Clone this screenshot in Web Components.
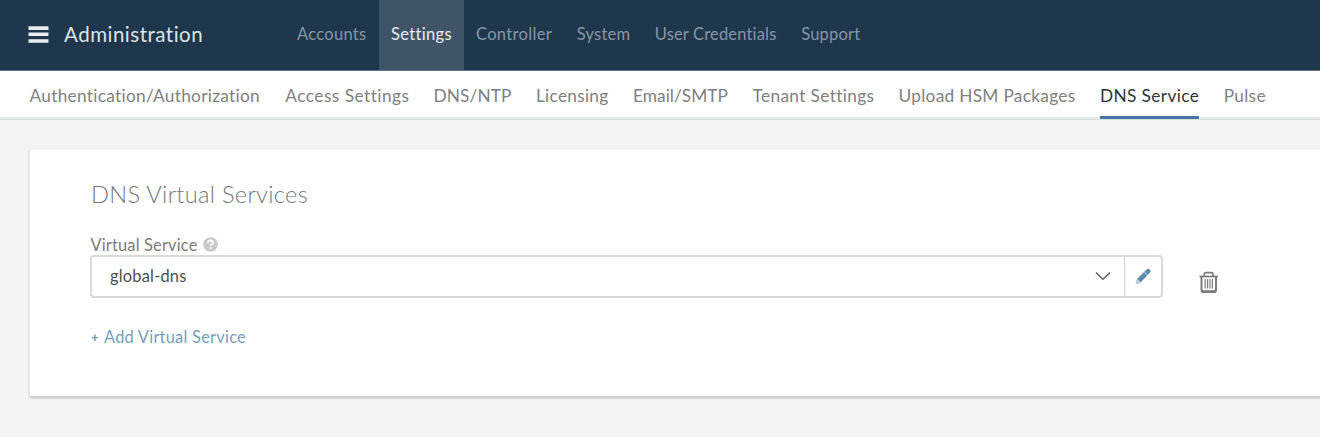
<!DOCTYPE html>
<html lang="en">
<head>
<meta charset="utf-8">
<title>Administration</title>
<style>
html,body{margin:0;height:437px;overflow:hidden;background:#f3f3f3;font-family:Lato,"Open Sans",sans-serif}
</style>
</head>
<body>
<admin-page></admin-page>
<script>
// A single line of text, tracked to fill the width given in "w".
class TextRun extends HTMLElement {
  constructor(){
    super();
    this.attachShadow({mode:'open'}).innerHTML='<style>:host{display:block;white-space:nowrap;flex:none}span{display:inline-block}</style><span><slot></slot></span>';
  }
  connectedCallback(){
    const w=+this.getAttribute('w');
    this.style.width=w+'px';
    const s=this.shadowRoot.querySelector('span');
    const n=this.textContent.length;
    s.style.letterSpacing=((w-s.getBoundingClientRect().width)/n).toFixed(3)+'px';
  }
}

class AdminHeader extends HTMLElement {
  constructor(){
    super();
    this.attachShadow({mode:'open'}).innerHTML=`<style>
:host{display:flex;height:70px;background:#1e374c;border-bottom:1px solid #60758a;box-sizing:content-box;line-height:70px}
svg{margin:26px 0 0 28px;width:21px;height:18px;flex:none}
.title{margin-left:15px;width:218px;font-size:20.5px;line-height:69px;color:#dde3e8}
nav{display:flex}
</style>
<svg viewBox="0 0 21 18"><path d="M.5 2.1h20M.5 8.2h20M.5 15h20" stroke="#e9ecef" stroke-width="3.6"/></svg>
<div class="title"><slot name="title"></slot></div><nav><slot></slot></nav>`;
  }
}

class NavItem extends HTMLElement {
  constructor(){
    super();
    this.attachShadow({mode:'open'}).innerHTML=`<style>
:host{display:block;height:70px;padding:0 12.25px;line-height:68px;font-size:16.5px;color:#8796a5}
:host([active]){background:#405468;color:#e8edf1}
</style><slot></slot>`;
  }
}

class TabBar extends HTMLElement {
  constructor(){
    super();
    this.attachShadow({mode:'open'}).innerHTML=`<style>
:host{display:flex;height:46px;gap:24.5px;padding-left:29.5px;background:#fff;border-bottom:2px solid #e5e9e8;box-shadow:0 1px #d9dddc}
</style><slot></slot>`;
  }
}

class TabItem extends HTMLElement {
  constructor(){
    super();
    this.attachShadow({mode:'open'}).innerHTML=`<style>
:host{display:block;box-sizing:border-box;height:48px;font-size:17.3px;line-height:50px;color:#808080}
:host([active]){color:#303438;border-bottom:3px solid #4474a3}
</style><slot></slot>`;
  }
}

class ContentCard extends HTMLElement {
  constructor(){
    super();
    this.attachShadow({mode:'open'}).innerHTML=`<style>
:host{display:flex;flex-direction:column;box-sizing:border-box;margin:31px 0 0 30px;height:246px;padding:27px 0 0 61px;background:#fff;box-shadow:0 1px #cccccc,0 2px #d6d6d6,-1px 1px 0 1px #e6e6e6,0 3px 1px #dadada}
.h{font-size:23.7px;font-weight:300;line-height:34px;color:#777}
</style><div class="h"><slot name="heading"></slot></div><slot></slot>`;
  }
}

class FieldLabel extends HTMLElement {
  constructor(){
    super();
    this.attachShadow({mode:'open'}).innerHTML=`<style>
:host{display:flex;align-items:center;gap:5px;margin:23px 0 0 -.5px;height:20px;font-size:16.4px;line-height:22px;color:#7c7c7c}
svg{width:15px;height:15px}
</style><slot></slot><svg viewBox="0 0 15 15"><circle cx="7.5" cy="7.5" r="7.3" fill="#c9c9c9"/><path d="M5 5.7C5.2 2.8 10 2.8 10 5.6C10 7.3 7.6 7.3 7.6 9" fill="none" stroke="#fff" stroke-width="1.9"/><path d="M6.6 10.3h2v1.8h-2z" fill="#fff"/></svg>`;
    this.style.paddingTop='1px';
    this.style.boxSizing='border-box';
  }
}

class ServiceSelect extends HTMLElement {
  constructor(){
    super();
    this.attachShadow({mode:'open'}).innerHTML=`<style>
:host{display:flex;margin:1px 0 0 -1px}
.box{display:flex;box-sizing:border-box;width:1073px;height:43px;border:2px solid #d9d9d9;border-radius:4px}
.value{flex:1;padding-left:18px;font-size:16.4px;line-height:38px;color:#4c4f52}
.chev{width:16px;height:10px;margin:14px 13px 0 0}
.edit{width:36px;border-left:1px solid #d4d4d4}
.edit svg{display:block;width:16px;height:17px;margin:10.5px 0 0 10px}
.trash{width:20px;height:23px;margin:16px 0 0 36px}
</style>
<div class="box"><div class="value"><slot></slot></div>
<svg class="chev" viewBox="0 0 16 10"><path d="M1 1.6L8 8.3L15 1.6" fill="none" stroke="#666" stroke-width="1.5"/></svg>
<div class="edit"><svg viewBox="0 0 16 17"><path d="M2 10.9L9 4L12.4 7.4L5.5 14.4Z" fill="#5b8eac"/><path d="M9.3 3.7L11.6 1.4Q13.4.1 14.8 1.6Q16.2 3 15 4.8L12.7 7.1Z" fill="#5b8eac"/><path d="M2 10.9L5.5 14.4L4.8 15.4L.7 16.3L1 12.8Z" fill="#b9cedb"/></svg></div></div>
<svg class="trash" viewBox="0 0 20 23"><g fill="none" stroke="#7c7c7c"><path d="M.5 5.5h18.4" stroke-width="1.8"/><path d="M5.3 5.2V3.2Q5.3 1.6 6.9 1.6H12.4Q14 1.6 14 3.2V5.2" stroke-width="1.7"/><path d="M2.5 5.6V19Q2.5 21 4.5 21H15Q17 21 17 19V5.6" stroke-width="2"/><path d="M3 20.6h13.5" stroke-width="2.8"/><path d="M6.2 8v9.5M8.6 8v9.5M11 8v9.5M13.4 8v9.5" stroke-width="1.2"/></g></svg>`;
  }
}

class AddLink extends HTMLElement {
  constructor(){
    super();
    this.attachShadow({mode:'open'}).innerHTML=`<style>
:host{display:flex;align-items:center;gap:5px;margin-top:27px;height:24px;font-size:16.4px;line-height:24px;color:#769fbb}
b{font-size:13px;width:8px;font-weight:900}
</style><b>+</b><slot></slot>`;
  }
}

class AdminPage extends HTMLElement {
  constructor(){
    super();
    this.attachShadow({mode:'open'}).innerHTML=`<style>:host{display:block}</style>
<admin-header><text-run slot="title" w="139.5">Administration</text-run>
<nav-item style="margin-left:2.7px"><text-run w="69.5">Accounts</text-run></nav-item><nav-item active><text-run w="60.5">Settings</text-run></nav-item><nav-item><text-run w="76.3">Controller</text-run></nav-item><nav-item><text-run w="53.5">System</text-run></nav-item><nav-item><text-run w="122">User Credentials</text-run></nav-item><nav-item><text-run w="59">Support</text-run></nav-item>
</admin-header>
<tab-bar><tab-item><text-run w="231.3">Authentication/Authorization</text-run></tab-item><tab-item><text-run w="123.7">Access Settings</text-run></tab-item><tab-item><text-run w="78">DNS/NTP</text-run></tab-item><tab-item><text-run w="72.5">Licensing</text-run></tab-item><tab-item><text-run w="95">Email/SMTP</text-run></tab-item><tab-item><text-run w="121.5">Tenant Settings</text-run></tab-item><tab-item><text-run w="177">Upload HSM Packages</text-run></tab-item><tab-item active><text-run w="99.3">DNS Service</text-run></tab-item><tab-item><text-run w="42">Pulse</text-run></tab-item></tab-bar>
<content-card><text-run slot="heading" w="217">DNS Virtual Services</text-run>
<field-label><text-run w="107">Virtual Service</text-run></field-label>
<service-select><text-run w="76.5">global-dns</text-run></service-select>
<add-link><text-run w="142">Add Virtual Service</text-run></add-link>
</content-card>`;
  }
}

customElements.define('admin-header',AdminHeader);
customElements.define('nav-item',NavItem);
customElements.define('tab-bar',TabBar);
customElements.define('tab-item',TabItem);
customElements.define('content-card',ContentCard);
customElements.define('service-select',ServiceSelect);
customElements.define('add-link',AddLink);
customElements.define('admin-page',AdminPage);
customElements.define('field-label',FieldLabel);
customElements.define('text-run',TextRun);
</script>
</body>
</html>
